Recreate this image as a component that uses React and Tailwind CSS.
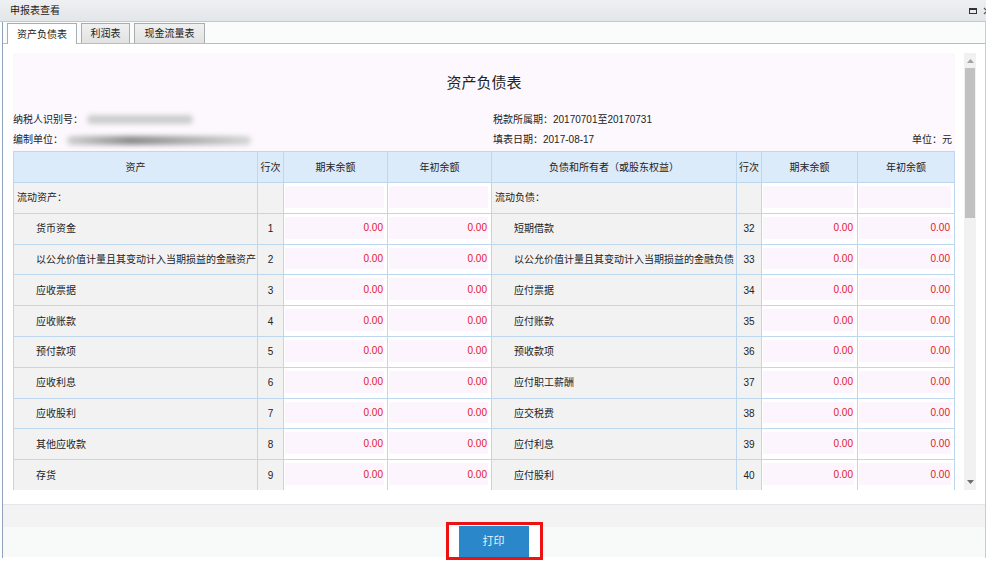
import React from 'react';

const assets = [
  { label: '流动资产：', section: true },
  { label: '货币资金', no: '1' },
  { label: '以公允价值计量且其变动计入当期损益的金融资产', no: '2' },
  { label: '应收票据', no: '3' },
  { label: '应收账款', no: '4' },
  { label: '预付款项', no: '5' },
  { label: '应收利息', no: '6' },
  { label: '应收股利', no: '7' },
  { label: '其他应收款', no: '8' },
  { label: '存货', no: '9' },
];

const debts = [
  { label: '流动负债：', section: true },
  { label: '短期借款', no: '32' },
  { label: '以公允价值计量且其变动计入当期损益的金融负债', no: '33' },
  { label: '应付票据', no: '34' },
  { label: '应付账款', no: '35' },
  { label: '预收款项', no: '36' },
  { label: '应付职工薪酬', no: '37' },
  { label: '应交税费', no: '38' },
  { label: '应付利息', no: '39' },
  { label: '应付股利', no: '40' },
];

// label cell
const Label = ({ item }) => (
  <div
    className={`h-[30.8px] border-r border-b border-[#bcd7ee] bg-[#f3f2f3] flex items-center whitespace-nowrap overflow-hidden ${
      item.section ? 'pl-[3px]' : 'pl-[22px]'
    }`}
  >
    {item.label}
  </div>
);

const No = ({ item }) => (
  <div className="h-[30.8px] border-r border-b border-[#bcd7ee] bg-[#f3f2f3] flex items-center justify-center">
    {item.no || ''}
  </div>
);

// value cell with pink input box
const Value = ({ item }) => (
  <div className="h-[30.8px] border-r border-b border-[#bcd7ee] bg-white pt-[3px] pb-[5px] pl-[1px] pr-[3px]">
    <div className="h-full bg-[#fdf5fd] flex items-center justify-end pr-[1px] text-[#e0202a]">
      {item.section ? '' : '0.00'}
    </div>
  </div>
);

const Head = ({ children }) => (
  <div className="h-[31px] border-r border-b border-[#bcd7ee] bg-[#dcebfa] flex items-center justify-center whitespace-nowrap">
    {children}
  </div>
);

// redacted value in the screenshot
const Blur = ({ w, dark }) => (
  <span
    className={`inline-block h-[9px] rounded-full blur-[2.5px] align-middle ${
      dark ? 'bg-[linear-gradient(90deg,#d0d0d0,#8c8c8c_35%,#a8a8a8_60%,#d6d6d6)]' : 'bg-[#cdcdcd]'
    }`}
    style={{ width: w }}
  />
);

export default function App() {
  return (
    <div className="w-[986px] h-[569px] bg-white overflow-hidden relative text-[10px] text-[#333] font-['Liberation_Sans','Noto_Sans_CJK_SC',sans-serif]">
      {/* Title bar */}
      <div className="h-[22px] bg-[linear-gradient(#eef0f2,#e3e6e9)] border-b border-[#c3c8cd] flex items-center justify-between pl-[10px]">
        <span className="text-[#222]">申报表查看</span>
        <div className="flex items-center gap-[6px] mr-[-5px]">
          <svg width="8" height="6" viewBox="0 0 8 6">
            <rect x="0.5" y="0.5" width="7" height="5" fill="none" stroke="#333" />
            <rect x="0" y="0" width="8" height="2" fill="#333" />
          </svg>
          <svg width="8" height="8" viewBox="0 0 8 8">
            <path d="M1 1 L7 7 M7 1 L1 7" stroke="#555" strokeWidth="1.2" />
          </svg>
        </div>
      </div>

      {/* Window body */}
      <div className="ml-[2px] w-[984px] h-[536px] border-l border-r border-l-[#8fa3bd] border-r-[#c9cdd1] flex flex-col">
        {/* Tabs */}
        <div className="h-[22px] bg-[#fafbfb] border-b border-[#b9bdc1] flex items-end pl-[4px] gap-[4px]">
          <div className="w-[70px] h-[21px] mb-[-1px] bg-white border border-b-0 border-[#a9adb1] flex items-center justify-center text-[#222]">
            资产负债表
          </div>
          <div className="w-[49px] h-[20px] bg-[linear-gradient(#f0f0f0,#e2e2e2)] border border-b-0 border-[#a9adb1] flex items-center justify-center text-[#222]">
            利润表
          </div>
          <div className="w-[71px] h-[20px] bg-[linear-gradient(#f0f0f0,#e2e2e2)] border border-b-0 border-[#a9adb1] flex items-center justify-center text-[#222]">
            现金流量表
          </div>
        </div>

        {/* Content */}
        <div className="pt-[9px] pl-[10px] flex">
          <div className="w-[942px] h-[437px] bg-[#fdf8fd] overflow-hidden">
            <div className="mt-[20px] h-[20px] flex items-center justify-center text-[15px] text-[#222]">
              资产负债表
            </div>
            <div className="mt-[16px] grid grid-cols-[480px_1fr] text-[#222]">
              <div className="h-[20px] flex items-center">
                纳税人识别号：<span className="ml-[4px]"><Blur w="106px" /></span>
              </div>
              <div className="h-[20px] flex items-center">税款所属期：20170701至20170731</div>
              <div className="h-[21px] flex items-center">
                编制单位：<span className="ml-[4px]"><Blur w="184px" dark /></span>
              </div>
              <div className="h-[21px] flex items-center justify-between pr-[3px]">
                <span>填表日期：2017-08-17</span>
                <span>单位：元</span>
              </div>
            </div>

            <div className="mt-[1px] grid grid-cols-[244px_26px_104px_104px_245px_25px_96px_97px] border-t border-l border-[#bcd7ee] text-[#222]">
              <Head>资产</Head>
              <Head>行次</Head>
              <Head>期末余额</Head>
              <Head>年初余额</Head>
              <Head>负债和所有者（或股东权益）</Head>
              <Head>行次</Head>
              <Head>期末余额</Head>
              <Head>年初余额</Head>
              {assets.map((a, i) => (
                <React.Fragment key={i}>
                  <Label item={a} />
                  <No item={a} />
                  <Value item={a} />
                  <Value item={a} />
                  <Label item={debts[i]} />
                  <No item={debts[i]} />
                  <Value item={debts[i]} />
                  <Value item={debts[i]} />
                </React.Fragment>
              ))}
            </div>
          </div>

          {/* Scrollbar */}
          <div className="ml-[9px] w-[12px] h-[437px] bg-[#f1f1f1] flex flex-col items-center">
            <svg width="7" height="4" viewBox="0 0 7 4" className="mt-[6px]">
              <path d="M0 4 L3.5 0 L7 4 Z" fill="#a3a3a3" />
            </svg>
            <div className="mt-[5px] w-[10px] h-[150px] bg-[#c1c1c1]" />
            <div className="flex-1" />
            <svg width="7" height="4" viewBox="0 0 7 4" className="mb-[6px]">
              <path d="M0 0 L7 0 L3.5 4 Z" fill="#6e6e6e" />
            </svg>
          </div>
        </div>

        <div className="h-[14px]" />

        {/* Footer */}
        <div className="h-[53px] border-t border-[#e3e7eb] bg-[linear-gradient(#f3f3f3_0,#f3f3f3_22px,#f8fafa_22px)] flex justify-center">
          <div className="mt-[17px] h-[38px] border-[3px] border-[#ee1111] bg-white pl-[10px] pr-[11px] pt-[1px]">
            <button className="w-[70px] h-[31px] bg-[#2a87c9] text-[#e8f2fa] text-[11px]">打印</button>
          </div>
        </div>
      </div>
    </div>
  );
}
